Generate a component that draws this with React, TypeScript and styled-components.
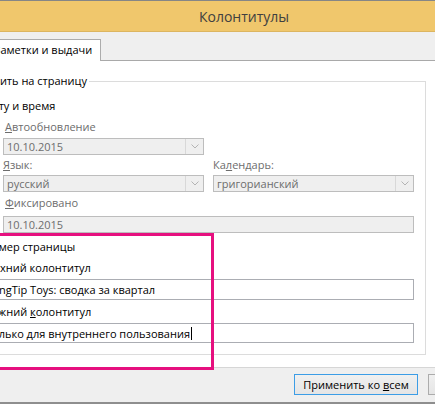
import React from "react";
import styled, { createGlobalStyle } from "styled-components";

const GlobalStyle = createGlobalStyle`
  html, body {
    margin: 0;
    padding: 0;
    background: #ffffff;
  }
  body {
    font-family: "Open Sans", "Noto Sans", "Liberation Sans", sans-serif;
    font-size: 11px;
    color: #000;
  }
  * {
    box-sizing: border-box;
  }
`;

const Window = styled.div`
  position: relative;
  width: 435px;
  height: 404px;
  overflow: hidden;
  border-top: 1px solid #868686;
  border-bottom: 2px solid #8e8e8e;
  display: flex;
  flex-direction: column;
`;

const TitleBar = styled.div`
  height: 31px;
  flex: none;
  background: #f0c76c;
  border-bottom: 1px solid #dcb560;
  display: flex;
  align-items: center;
  justify-content: center;
  padding-left: 53px;
  font-size: 14px;
  color: #404040;
`;

// the dialog is wider than the shot, so its left part is hidden
const Sheet = styled.div`
  margin-left: -60px;
  width: 640px;
  display: flex;
  flex-direction: column;
  flex: 1;
`;

const TabStrip = styled.div`
  height: 29px;
  flex: none;
  background: #efefef;
  border-bottom: 1px solid #a9a9a9;
  display: flex;
  align-items: flex-end;
  padding-left: 46px;
`;

const Tab = styled.div`
  height: 22px;
  margin-bottom: -1px;
  background: #fff;
  border: 1px solid #acacac;
  border-bottom: none;
  padding: 0 8px 0 7px;
  line-height: 20px;
  white-space: nowrap;
`;

const Panel = styled.div`
  height: 307px;
  flex: none;
  background: #fff;
  border-bottom: 1px solid #d6d6d6;
  padding: 12px 0 0 15px;
`;

const Group = styled.fieldset`
  width: 471px;
  margin: 0;
  padding: 0 0 11px 0;
  border: 1px solid #dcdcdc;
`;

const Legend = styled.legend`
  margin-left: 7px;
  padding: 0 2px;
  line-height: 16px;
  white-space: nowrap;
`;

const Row = styled.div<{ $indent: number; $gap: number }>`
  display: flex;
  align-items: center;
  height: 16px;
  margin-left: ${(p) => p.$indent}px;
  margin-top: ${(p) => p.$gap}px;
  gap: 5px;
  white-space: nowrap;
`;

const Label = styled.span<{ $disabled?: boolean }>`
  line-height: 16px;
  color: ${(p) => (p.$disabled ? "#6d6d6d" : "#000")};
`;

const CheckBox = styled.span`
  width: 13px;
  height: 13px;
  flex: none;
  border: 1px solid #333;
  background: #fff;
  display: flex;
  align-items: center;
  justify-content: center;
`;

const Radio = styled.span`
  width: 13px;
  height: 13px;
  flex: none;
  border: 1px solid #bcbcbc;
  border-radius: 50%;
  background: #f4f4f4;
`;

const SelectSlot = styled.div<{ $gap: number }>`
  width: 201px;
  margin: ${(p) => p.$gap}px 0 0 47px;
`;

const Pair = styled.div<{ $gap: number; $height: number }>`
  display: grid;
  grid-template-columns: 201px 201px;
  column-gap: 9px;
  margin: ${(p) => p.$gap}px 0 0 47px;
  height: ${(p) => p.$height}px;
  align-items: center;
  white-space: nowrap;
`;

const Combo = styled.div`
  display: flex;
  height: 17px;
  border: 1px solid #bdbdbd;
  background: #efefef;
  color: #6d6d6d;
`;

const ComboText = styled.span`
  flex: 1;
  padding-left: 3px;
  line-height: 15px;
`;

const ComboButton = styled.span`
  width: 18px;
  border-left: 1px solid #d8d8d8;
  display: flex;
  align-items: center;
  justify-content: center;
`;

const Field = styled.div<{ $indent: number; $width: number; $height: number; $gap: number; $disabled?: boolean }>`
  margin: ${(p) => p.$gap}px 0 0 ${(p) => p.$indent}px;
  width: ${(p) => p.$width}px;
  height: ${(p) => p.$height}px;
  border: 1px solid ${(p) => (p.$disabled ? "#bdbdbd" : "#abadb3")};
  background: ${(p) => (p.$disabled ? "#efefef" : "#fff")};
  color: ${(p) => (p.$disabled ? "#6d6d6d" : "#000")};
  padding-left: 3px;
  display: flex;
  align-items: center;
  white-space: nowrap;
`;

const Caret = styled.span`
  display: inline-block;
  width: 1px;
  height: 13px;
  margin-left: 1px;
  background: #000;
`;

const Footer = styled.div`
  flex: 1;
  background: #efefef;
  display: flex;
  gap: 10px;
  padding: 6px 0 0 354px;
`;

const Button = styled.button<{ $primary?: boolean; $width: number }>`
  width: ${(p) => p.$width}px;
  height: 21px;
  flex: none;
  padding: 0;
  font: inherit;
  color: #000;
  border: 1px solid ${(p) => (p.$primary ? "#3c9de6" : "#acacac")};
  background: linear-gradient(#f0f0f0, #e5e5e5);
`;

const Highlight = styled.div`
  position: absolute;
  left: -10px;
  top: 232px;
  width: 224px;
  height: 137px;
  border: 3px solid #e6107f;
  pointer-events: none;
`;

const Chevron = () => (
  <svg width="8" height="5" viewBox="0 0 8 5">
    <path d="M0.5 0.5 L4 4 L7.5 0.5" fill="none" stroke="#b4b4b4" strokeWidth="1" />
  </svg>
);

const Tick = () => (
  <svg width="9" height="8" viewBox="0 0 9 8">
    <path d="M1 4 L3.5 6.5 L8 1" fill="none" stroke="#222" strokeWidth="1.4" />
  </svg>
);

const Select: React.FC<{ value: string }> = ({ value }) => (
  <Combo>
    <ComboText>{value}</ComboText>
    <ComboButton>
      <Chevron />
    </ComboButton>
  </Combo>
);

// hidden = how much of the label sits left of the shot
const CheckRow: React.FC<{ hidden: number; gap: number; checked?: boolean; children: React.ReactNode }> = ({
  hidden,
  gap,
  checked,
  children,
}) => (
  <Row $indent={44 - hidden - 18} $gap={gap}>
    <CheckBox>{checked && <Tick />}</CheckBox>
    <Label>{children}</Label>
  </Row>
);

const App: React.FC = () => {
  return (
    <>
      <GlobalStyle />
      <Window>
        <TitleBar>Колонтитулы</TitleBar>
        <Sheet>
          <TabStrip>
            <Tab>Заметки и выдачи</Tab>
          </TabStrip>
          <Panel>
            <Group>
              <Legend>Включить на страницу</Legend>
              <CheckRow hidden={15} gap={9}>
                Дату и время
              </CheckRow>
              <Row $indent={31} $gap={5}>
                <Radio />
                <Label $disabled>
                  <u>А</u>втообновление
                </Label>
              </Row>
              <SelectSlot $gap={3}>
                <Select value="10.10.2015" />
              </SelectSlot>
              <Pair $gap={2} $height={16}>
                <Label $disabled>
                  <u>Я</u>зык:
                </Label>
                <Label $disabled>
                  Ка<u>л</u>ендарь:
                </Label>
              </Pair>
              <Pair $gap={2} $height={17}>
                <Select value="русский" />
                <Select value="григорианский" />
              </Pair>
              <Row $indent={31} $gap={3}>
                <Radio />
                <Label $disabled>
                  <u>Ф</u>иксировано
                </Label>
              </Row>
              <Field $indent={47} $width={411} $height={17} $gap={5} $disabled>
                10.10.2015
              </Field>
              <CheckRow hidden={16} gap={6} checked>
                Номер страницы
              </CheckRow>
              <CheckRow hidden={20} gap={5} checked>
                Верхний колонтитул
              </CheckRow>
              <Field $indent={26} $width={432} $height={21} $gap={3}>
                WingTip Toys: сводка за квартал
              </Field>
              <CheckRow hidden={17} gap={4} checked>
                Нижний <u>к</u>олонтитул
              </CheckRow>
              <Field $indent={26} $width={432} $height={20} $gap={3}>
                Только для внутреннего пользования
                <Caret />
              </Field>
            </Group>
          </Panel>
          <Footer>
            <Button $primary $width={124}>
              Применить ко <u>в</u>сем
            </Button>
            <Button $width={90}>Применить</Button>
          </Footer>
        </Sheet>
        <Highlight />
      </Window>
    </>
  );
};

export default App;
